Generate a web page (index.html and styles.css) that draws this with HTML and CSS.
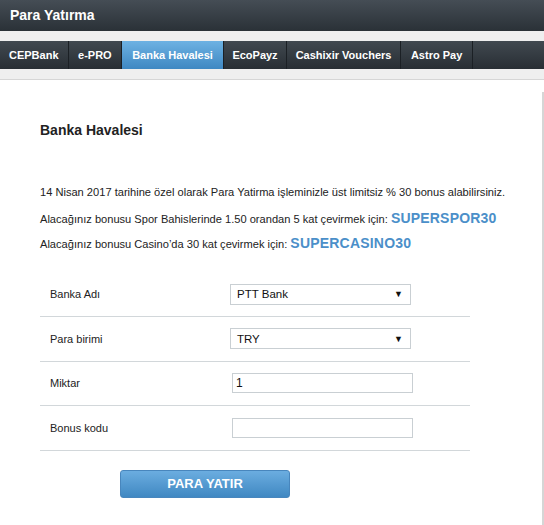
FILE: index.html
```html
<!DOCTYPE html>
<html lang="tr">
<head>
<meta charset="utf-8">
<title>Para Yatırma</title>
<link rel="stylesheet" href="styles.css">
</head>
<body>
<header class="topbar"><h1 class="title">Para Yatırma</h1></header>
<nav class="tabs">
  <a class="tab">CEPBank</a>
  <a class="tab tab-narrow">e-PRO</a>
  <a class="tab active">Banka Havalesi</a>
  <a class="tab tab-tight">EcoPayz</a>
  <a class="tab tab-tight">Cashixir Vouchers</a>
  <a class="tab tab-wide">Astro Pay</a>
</nav>
<main class="content">
  <section class="panel">
    <h2 class="heading">Banka Havalesi</h2>
    <div class="info">
      <p class="line">14 Nisan 2017 tarihine özel olarak Para Yatirma işleminizle üst limitsiz % 30 bonus alabilirsiniz.</p>
      <p class="line">Alacağınız bonusu Spor Bahislerinde 1.50 orandan 5 kat çevirmek için: <span class="code">SUPERSPOR30</span></p>
      <p class="line">Alacağınız bonusu Casino’da 30 kat çevirmek için: <span class="code">SUPERCASINO30</span></p>
    </div>
    <div class="form">
      <div class="row">
        <span class="label">Banka Adı</span>
        <div class="select"><span>PTT Bank</span><span class="arrow">▼</span></div>
      </div>
      <div class="row">
        <span class="label">Para birimi</span>
        <div class="select"><span>TRY</span><span class="arrow">▼</span></div>
      </div>
      <div class="row">
        <span class="label">Miktar</span>
        <div class="input">1</div>
      </div>
      <div class="row">
        <span class="label">Bonus kodu</span>
        <div class="input"></div>
      </div>
    </div>
    <button class="submit">PARA YATIR</button>
  </section>
</main>
</body>
</html>
```
FILE: styles.css
```css
* { box-sizing: border-box; }
html, body { margin: 0; padding: 0; }
body {
  width: 544px;
  height: 525px;
  overflow: hidden;
  background: #ffffff;
  font-family: "Liberation Sans", Arial, sans-serif;
  color: #222;
}
.topbar {
  height: 31px;
  background: linear-gradient(#454d55, #2a3137);
  border-bottom: 10px solid #efefef;
  box-sizing: content-box;
}
.title {
  margin: 0;
  padding-left: 10px;
  font-size: 14px;
  font-weight: bold;
  line-height: 31px;
  color: #fff;
}
.tabs {
  display: flex;
  height: 28px;
  background: linear-gradient(#414950, #282e34);
  border-bottom: 10px solid #efefef;
  box-sizing: content-box;
}
.tab {
  display: block;
  padding: 0 9px;
  border-right: 1px solid #1b2025;
  font-size: 11px;
  font-weight: bold;
  line-height: 28px;
  color: #fff;
}
.tab-narrow { padding: 0 9.5px; }
.tab-tight { padding: 0 8.5px; }
.tab-wide { padding: 0 10px; }
.tab.active {
  background: linear-gradient(#6db2e3, #3f88c2);
  padding: 0 10px;
}
.content {
  border-top: 1px solid #d6d6d6;
  padding-top: 12px;
}
.panel {
  border-right: 2px solid #d6d6d6;
  padding: 30px 0 30px 40px;
}
.heading {
  margin: 0;
  font-size: 14px;
  font-weight: bold;
  line-height: 17px;
  color: #222;
}
.info { margin-top: 41px; }
.line {
  margin: 0;
  font-size: 11.1px;
  line-height: 25.5px;
  height: 25.5px;
  color: #222;
}
.code {
  font-size: 14px;
  font-weight: bold;
  color: #4b8fc9;
  letter-spacing: 0.2px;
}
.form {
  width: 430px;
  margin-top: 16px;
}
.row {
  display: flex;
  align-items: center;
  height: 44.5px;
  border-bottom: 1px solid #d2d7da;
}
.label {
  width: 190px;
  padding-left: 10px;
  font-size: 11px;
  color: #222;
}
.select {
  display: flex;
  justify-content: space-between;
  align-items: center;
  width: 181px;
  height: 21px;
  padding: 0 7px 0 6px;
  border: 1px solid #c9cfd3;
  font-size: 11.5px;
  color: #111;
  background: #fff;
}
.arrow { font-size: 9px; }
.input {
  width: 181px;
  height: 20px;
  margin-left: 2px;
  padding-left: 3px;
  border: 1px solid #c9cfd3;
  font-size: 12px;
  line-height: 18px;
  color: #111;
}
.submit {
  display: block;
  width: 170px;
  height: 28px;
  margin: 19px 0 0 80px;
  border: 1px solid #4886bd;
  border-radius: 3px;
  background: linear-gradient(#6bade0, #4088c2);
  font-family: "Liberation Sans", Arial, sans-serif;
  font-size: 13px;
  font-weight: bold;
  color: #fff;
}
```
